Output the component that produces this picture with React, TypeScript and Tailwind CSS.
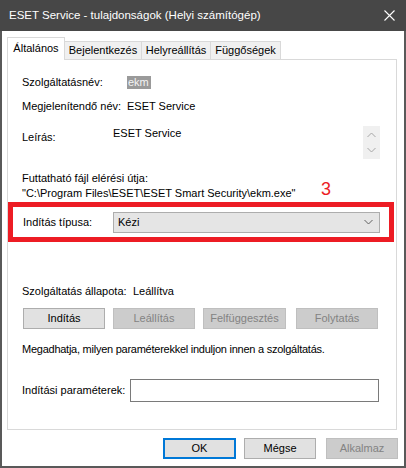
import React from "react";

const font = "font-['Liberation_Sans',Arial,sans-serif]";

function Chevron({ dir, className }: { dir: "up" | "down"; className?: string }) {
  return (
    <svg width="9" height="6" viewBox="0 0 9 6" className={className}>
      {dir === "up" ? (
        <path d="M0.5 5 L4.5 1 L8.5 5" fill="none" stroke="currentColor" strokeWidth="1" />
      ) : (
        <path d="M0.5 1 L4.5 5 L8.5 1" fill="none" stroke="currentColor" strokeWidth="1" />
      )}
    </svg>
  );
}

export default function App() {
  const tabs = ["Bejelentkezés", "Helyreállítás", "Függőségek"];
  const tabWidths = ["w-[77px]", "w-[69px]", "w-[70px]"];

  return (
    <div className={`w-[406px] h-[468px] flex flex-col bg-white text-black ${font}`}>
      {/* title bar */}
      <div className="h-[31px] bg-[#474747] flex items-center pl-[9px] shrink-0">
        <span className="text-white text-[11.5px] leading-none">
          ESET Service - tulajdonságok (Helyi számítógép)
        </span>
        <svg width="11" height="11" viewBox="0 0 11 11" className="ml-auto mr-[11px]">
          <path d="M0.5 0.5 L10.5 10.5 M10.5 0.5 L0.5 10.5" stroke="#ffffff" strokeWidth="1.1" />
        </svg>
      </div>

      <div className="flex-1 flex flex-col border-x-2 border-b-2 border-[#595959] text-[11px]">
        {/* tabs */}
        <div className="flex items-start h-[22px] mt-[6px] ml-[5px]">
          <div className="relative z-10 w-[58px] h-[23px] bg-white border-x border-t border-[#d9d9d9] flex items-center justify-center pb-[1px]">
            Általános
          </div>
          {tabs.map((t, i) => (
            <div
              key={t}
              className={`mt-[4px] h-[18px] ${tabWidths[i]} bg-[#f0f0f0] border-t border-r border-[#d9d9d9] flex items-center justify-center`}
            >
              {t}
            </div>
          ))}
        </div>

        {/* panel */}
        <div className="relative ml-[5px] w-[390px] h-[371px] border border-[#d9d9d9] bg-white flex flex-col pl-[14px] pr-[16px]">
          <div className="mt-[14px] h-[16px] flex items-center">
            <span className="w-[105px]">Szolgáltatásnév:</span>
            <span className="h-[13px] leading-[13px] bg-[#9a9a9a] text-[#f4f4f4] pl-[1px] pr-[2px]">ekm</span>
          </div>
          <div className="mt-[8px] h-[16px] flex items-center">
            <span className="w-[105px]">Megjelenítendő név:</span>
            <span>ESET Service</span>
          </div>
          <div className="mt-[11px] h-[34px] flex items-start">
            <span className="w-[91px] mt-[4px] leading-[16px]">Leírás:</span>
            <span className="leading-[16px]">ESET Service</span>
            <div className="ml-auto mt-[1px] w-[17px] h-[33px] bg-[#f0f0f0] flex flex-col items-center justify-between py-[6px] text-[#a6a6a6]">
              <Chevron dir="up" />
              <Chevron dir="down" />
            </div>
          </div>
          <div className="mt-[12px] leading-[15px]">
            <div>Futtatható fájl elérési útja:</div>
            <div>"C:\Program Files\ESET\ESET Smart Security\ekm.exe"</div>
          </div>

          <div className="absolute left-[313px] top-[120px] text-[18px] leading-[18px] text-[#ec1c24]">3</div>

          {/* highlighted start type */}
          <div className="-ml-[14px] mt-[1px] w-[386px] h-[40px] border-[5px] border-[#ed1c24] flex items-center pl-[10px] shrink-0">
            <span className="w-[90px]">Indítás típusa:</span>
            <div className="w-[267px] h-[21px] bg-[#e5e5e5] border border-[#adadad] flex items-center pl-[4px] pr-[6px]">
              <span>Kézi</span>
              <Chevron dir="down" className="ml-auto text-[#606060]" />
            </div>
          </div>

          <div className="mt-[41px] h-[16px] flex items-center">
            <span className="w-[111px]">Szolgáltatás állapota:</span>
            <span>Leállítva</span>
          </div>
          <div className="mt-[9px] h-[21px] flex">
            <div className="ml-[1px] w-[82px] h-full bg-[#e1e1e1] border border-[#adadad] flex items-center justify-center">
              Indítás
            </div>
            <div className="ml-[8px] w-[82px] h-full bg-[#cccccc] border border-[#bfbfbf] text-[#838383] flex items-center justify-center">
              Leállítás
            </div>
            <div className="ml-[8px] w-[83px] h-full bg-[#cccccc] border border-[#bfbfbf] text-[#838383] flex items-center justify-center">
              Felfüggesztés
            </div>
            <div className="ml-[10px] w-[82px] h-full bg-[#cccccc] border border-[#bfbfbf] text-[#838383] flex items-center justify-center">
              Folytatás
            </div>
          </div>
          <div className="mt-[12px] h-[16px] flex items-center tracking-[-0.25px]">
            Megadhatja, milyen paraméterekkel induljon innen a szolgáltatás.
          </div>
          <div className="mt-[22px] h-[23px] flex items-center">
            <span className="w-[108px]">Indítási paraméterek:</span>
            <div className="w-[249px] h-[23px] bg-white border border-[#7a7a7a]" />
          </div>
        </div>

        {/* dialog buttons */}
        <div className="mt-[8px] h-[21px] flex">
          <div className="ml-[161px] w-[73px] h-full bg-[#e1e1e1] border-2 border-[#0078d7] flex items-center justify-center">
            OK
          </div>
          <div className="ml-[8px] w-[72px] h-full bg-[#e1e1e1] border border-[#adadad] flex items-center justify-center">
            Mégse
          </div>
          <div className="ml-[10px] w-[72px] h-full bg-[#cccccc] border border-[#bfbfbf] text-[#838383] flex items-center justify-center">
            Alkalmaz
          </div>
        </div>
      </div>
    </div>
  );
}
